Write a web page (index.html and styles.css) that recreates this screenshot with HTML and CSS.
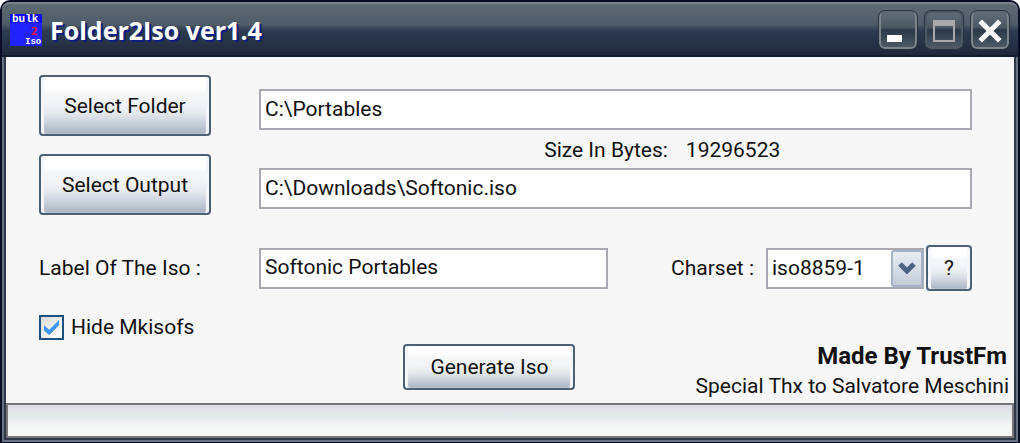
FILE: index.html
```
<!doctype html>
<html lang="en">
  <head>
    <meta charset="UTF-8" />
    <meta name="viewport" content="width=device-width, initial-scale=1.0" />
    <title>Folder2Iso ver1.4</title>
    <link rel="stylesheet" href="styles.css">
  </head>
  <body>
    <div class="window">
      <header class="titlebar">
        <svg class="app-icon" viewBox="0 0 32 32" aria-hidden="true">
          <rect width="32" height="32" fill="#0c0cf0" />
          <rect y="9" width="32" height="23" fill="#2222ff" />
          <text class="icon-text" x="2" y="8" fill="#fff">bulk</text>
          <text class="icon-two" x="21" y="21" fill="#f0101c">2</text>
          <text class="icon-text small" x="15" y="30" fill="#fff">Iso</text>
        </svg>
        <h1>Folder2Iso ver1.4</h1>
        <div class="window-controls">
          <button type="button" class="control-btn" aria-label="Minimize">
            <svg viewBox="0 0 38 38"><path d="M8 24h15v7H8z" fill="#fff" /></svg>
          </button>
          <button type="button" class="control-btn dim" aria-label="Maximize">
            <svg viewBox="0 0 38 38">
              <path d="M8 9h22v22H8zM10 15v14h18V15z" fill="#a9a9ab" fill-rule="evenodd" />
            </svg>
          </button>
          <button type="button" class="control-btn" aria-label="Close">
            <svg viewBox="0 0 38 38">
              <path d="M11 12L27 28M27 12L11 28" stroke="#fff" stroke-width="5" stroke-linecap="square" />
            </svg>
          </button>
        </div>
      </header>

      <form class="content">
        <div class="form-row">
          <div class="pick-buttons">
            <button type="button" class="btn tall">Select Folder</button>
            <button type="button" class="btn tall">Select Output</button>
          </div>
          <div class="paths">
            <input type="text" class="field" aria-label="Folder" value="C:\Portables" />
            <p class="size-line"><span>Size In Bytes:</span><span>19296523</span></p>
            <input type="text" class="field" aria-label="Output" value="C:\Downloads\Softonic.iso" />
          </div>
        </div>

        <div class="form-row options">
          <label for="isoLabel">Label Of The Iso :</label>
          <div class="option-fields">
            <input type="text" id="isoLabel" class="field" value="Softonic Portables" />
            <div class="charset">
              <label for="charset">Charset :</label>
              <div class="select-wrap">
                <select id="charset" class="field">
                  <option>iso8859-1</option>
                </select>
                <span class="select-arrow">
                  <svg viewBox="0 0 18 12" aria-hidden="true">
                    <path d="M2 2l7 7 7-7" fill="none" stroke="#4d6185" stroke-width="5" />
                  </svg>
                </span>
              </div>
              <button type="button" class="btn help">?</button>
            </div>
          </div>
        </div>

        <div class="check-row">
          <input type="checkbox" id="hideMkisofs" checked />
          <label for="hideMkisofs">Hide Mkisofs</label>
        </div>

        <div class="bottom-row">
          <button type="button" class="btn generate">Generate Iso</button>
          <div class="credits">
            <strong>Made By TrustFm</strong>
            <span>Special Thx to Salvatore Meschini</span>
          </div>
        </div>
      </form>

      <footer class="statusbar"></footer>
    </div>
  </body>
</html>
```
FILE: styles.css
```
* {
  margin: 0;
  padding: 0;
  box-sizing: border-box;
}

body {
  font-family: Roboto, sans-serif;
  font-size: 21px;
  line-height: 30px;
  color: #111;
  background: #fff;
}

button,
input,
select {
  font: inherit;
  color: inherit;
}

label {
  white-space: nowrap;
}

.window {
  display: flex;
  flex-direction: column;
  min-height: 100vh;
  border: 2px solid #0a0d26;
  border-radius: 10px 10px 0 0;
  background: #2e3648;
  box-shadow: inset 0 0 0 2px #687381;
  padding: 0 4px 4px;
}

.titlebar {
  display: flex;
  align-items: center;
  gap: 8px;
  height: 55px;
  margin: 0 -4px;
  padding: 0 9px 0 8px;
  border-top: 2px solid #7b8488;
  border-bottom: 2px solid #151d2d;
  border-radius: 8px 8px 0 0;
  background: linear-gradient(#5f6a74, #4f5b68 40%, #2f3c50 52%, #1d283a);
}

.app-icon {
  width: 32px;
  height: 32px;
}

.icon-text {
  font: bold 11px "Liberation Mono", monospace;
}

.icon-text.small {
  font-size: 9px;
}

.icon-two {
  font: bold 13px "Liberation Serif", serif;
}

h1 {
  flex: 1;
  font-family: "Open Sans", sans-serif;
  font-size: 25px;
  font-weight: 700;
  color: #fff;
  text-shadow: 2px 2px 0 #0c1c84;
}

.window-controls {
  display: flex;
  gap: 8px;
}

.control-btn {
  width: 38px;
  height: 38px;
  border: 2px solid #7b838b;
  border-top-color: #5d6873;
  border-radius: 6px;
  outline: 1px solid #27313f;
  background: linear-gradient(#5f6b76, #4b5763 42%, #2b394a 50%, #4c5964);
}

.control-btn.dim {
  border-color: #4e5965;
}

.control-btn svg {
  display: block;
  width: 38px;
  height: 38px;
  margin: -2px;
}

.content {
  flex: 1;
  padding: 18px 42px 0 33px;
  background: #f7f7f7;
}

.form-row {
  display: grid;
  grid-template-columns: 172px 1fr;
  column-gap: 48px;
}

.pick-buttons {
  display: flex;
  flex-direction: column;
  gap: 18px;
}

.paths {
  padding-top: 14px;
}

.btn {
  height: 46px;
  border: 2px solid #4c6076;
  border-radius: 4px;
  background: linear-gradient(#fff 20%, #f5f6f8 30%, #f3f4f7 45%, #e6ebed 62%, #d3d9e2 75%, #a9b3c2);
  box-shadow: inset 3px 0 1px #f4f6f9, inset -3px 0 1px #f4f6f9;
}

.btn.tall {
  height: 61px;
}

.field {
  display: block;
  width: 100%;
  height: 41px;
  padding: 0 4px 2px;
  border: 2px solid #a9a9b1;
  background: #fff;
}

.size-line {
  display: flex;
  gap: 18px;
  padding: 5px 0 3px 40%;
}

.options {
  align-items: center;
  margin-top: 30px;
}

.option-fields {
  display: flex;
  align-items: center;
  justify-content: space-between;
}

.option-fields > .field {
  width: 49%;
}

.charset {
  display: flex;
  align-items: center;
}

.charset label {
  margin-right: 12px;
}

.select-wrap {
  position: relative;
  width: 158px;
  margin-right: 2px;
}

select.field {
  appearance: none;
  padding-bottom: 0;
}

.select-arrow {
  position: absolute;
  top: 2px;
  right: 1px;
  bottom: 2px;
  display: flex;
  align-items: center;
  justify-content: center;
  width: 32px;
  border: 2px solid #a3b1c9;
  border-radius: 3px;
  background: linear-gradient(#e9edf4, #d3dae5 60%, #c3cbd9);
  pointer-events: none;
}

.select-arrow svg {
  width: 18px;
  height: 12px;
}

.help {
  width: 46px;
}

.check-row {
  display: flex;
  align-items: center;
  gap: 7px;
  margin-top: 24px;
  line-height: 25px;
}

.check-row input {
  display: grid;
  place-items: center;
  width: 25px;
  height: 25px;
  border: 2px solid #1d5182;
  background: linear-gradient(135deg, #dcdcdc, #fff);
  appearance: none;
}

.check-row input:checked::before {
  content: "";
  width: 15px;
  height: 15px;
  background: #3d94fb;
  clip-path: polygon(0 35%, 35% 65%, 100% 0, 100% 35%, 35% 100%, 0 70%);
}

.bottom-row {
  display: flex;
  justify-content: space-between;
  margin: 0 -37px 0 -33px;
  padding: 1px 0 2px 42.6%;
}

.generate {
  width: 172px;
  margin-top: 3px;
}

.credits {
  display: flex;
  flex-direction: column;
  align-items: flex-end;
}

.credits strong {
  margin-right: 2px;
  font-size: 24px;
}

.statusbar {
  height: 35px;
  border: 2px solid #77777b;
  background: linear-gradient(#dedde6, #e2ebea 40%, #f5f6f6 65%, #f7f7f7);
}
```
